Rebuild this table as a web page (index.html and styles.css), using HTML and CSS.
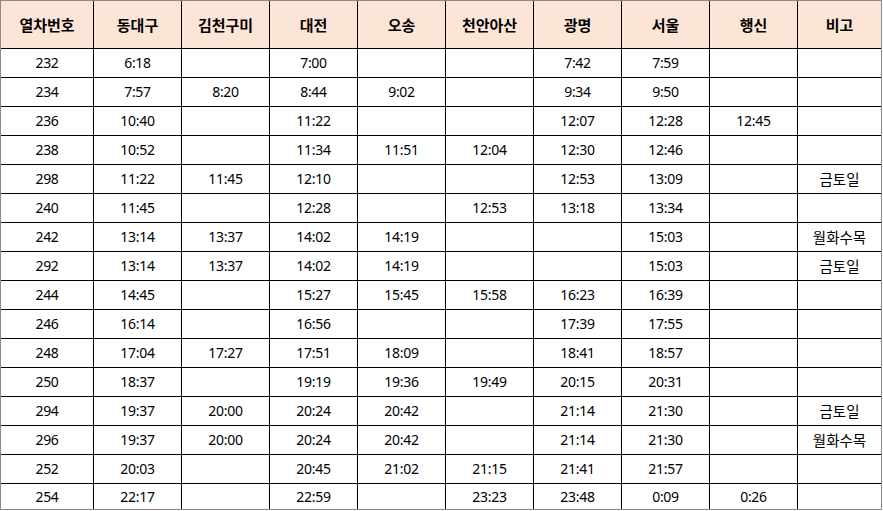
FILE: index.html
```html
<!DOCTYPE html>
<html lang="ko">
<head>
<meta charset="utf-8">
<title>열차 시간표</title>
<link rel="stylesheet" href="styles.css">
</head>
<body>
<div class="frame">
  <div class="row head">
    <div class="c">열차번호</div><div class="c">동대구</div><div class="c">김천구미</div><div class="c">대전</div><div class="c">오송</div><div class="c">천안아산</div><div class="c">광명</div><div class="c">서울</div><div class="c">행신</div><div class="c">비고</div>
  </div>
  <div class="row"><div class="c">232</div><div class="c">6:18</div><div class="c"></div><div class="c">7:00</div><div class="c"></div><div class="c"></div><div class="c">7:42</div><div class="c">7:59</div><div class="c"></div><div class="c"></div></div>
  <div class="row"><div class="c">234</div><div class="c">7:57</div><div class="c">8:20</div><div class="c">8:44</div><div class="c">9:02</div><div class="c"></div><div class="c">9:34</div><div class="c">9:50</div><div class="c"></div><div class="c"></div></div>
  <div class="row"><div class="c">236</div><div class="c">10:40</div><div class="c"></div><div class="c">11:22</div><div class="c"></div><div class="c"></div><div class="c">12:07</div><div class="c">12:28</div><div class="c">12:45</div><div class="c"></div></div>
  <div class="row"><div class="c">238</div><div class="c">10:52</div><div class="c"></div><div class="c">11:34</div><div class="c">11:51</div><div class="c">12:04</div><div class="c">12:30</div><div class="c">12:46</div><div class="c"></div><div class="c"></div></div>
  <div class="row"><div class="c">298</div><div class="c">11:22</div><div class="c">11:45</div><div class="c">12:10</div><div class="c"></div><div class="c"></div><div class="c">12:53</div><div class="c">13:09</div><div class="c"></div><div class="c note">금토일</div></div>
  <div class="row"><div class="c">240</div><div class="c">11:45</div><div class="c"></div><div class="c">12:28</div><div class="c"></div><div class="c">12:53</div><div class="c">13:18</div><div class="c">13:34</div><div class="c"></div><div class="c"></div></div>
  <div class="row"><div class="c">242</div><div class="c">13:14</div><div class="c">13:37</div><div class="c">14:02</div><div class="c">14:19</div><div class="c"></div><div class="c"></div><div class="c">15:03</div><div class="c"></div><div class="c note">월화수목</div></div>
  <div class="row"><div class="c">292</div><div class="c">13:14</div><div class="c">13:37</div><div class="c">14:02</div><div class="c">14:19</div><div class="c"></div><div class="c"></div><div class="c">15:03</div><div class="c"></div><div class="c note">금토일</div></div>
  <div class="row"><div class="c">244</div><div class="c">14:45</div><div class="c"></div><div class="c">15:27</div><div class="c">15:45</div><div class="c">15:58</div><div class="c">16:23</div><div class="c">16:39</div><div class="c"></div><div class="c"></div></div>
  <div class="row"><div class="c">246</div><div class="c">16:14</div><div class="c"></div><div class="c">16:56</div><div class="c"></div><div class="c"></div><div class="c">17:39</div><div class="c">17:55</div><div class="c"></div><div class="c"></div></div>
  <div class="row"><div class="c">248</div><div class="c">17:04</div><div class="c">17:27</div><div class="c">17:51</div><div class="c">18:09</div><div class="c"></div><div class="c">18:41</div><div class="c">18:57</div><div class="c"></div><div class="c"></div></div>
  <div class="row"><div class="c">250</div><div class="c">18:37</div><div class="c"></div><div class="c">19:19</div><div class="c">19:36</div><div class="c">19:49</div><div class="c">20:15</div><div class="c">20:31</div><div class="c"></div><div class="c"></div></div>
  <div class="row"><div class="c">294</div><div class="c">19:37</div><div class="c">20:00</div><div class="c">20:24</div><div class="c">20:42</div><div class="c"></div><div class="c">21:14</div><div class="c">21:30</div><div class="c"></div><div class="c note">금토일</div></div>
  <div class="row"><div class="c">296</div><div class="c">19:37</div><div class="c">20:00</div><div class="c">20:24</div><div class="c">20:42</div><div class="c"></div><div class="c">21:14</div><div class="c">21:30</div><div class="c"></div><div class="c note">월화수목</div></div>
  <div class="row"><div class="c">252</div><div class="c">20:03</div><div class="c"></div><div class="c">20:45</div><div class="c">21:02</div><div class="c">21:15</div><div class="c">21:41</div><div class="c">21:57</div><div class="c"></div><div class="c"></div></div>
  <div class="row last"><div class="c">254</div><div class="c">22:17</div><div class="c"></div><div class="c">22:59</div><div class="c"></div><div class="c">23:23</div><div class="c">23:48</div><div class="c">0:09</div><div class="c">0:26</div><div class="c"></div></div>
</div>
</body>
</html>
```

FILE: styles.css
```css
* { box-sizing: border-box; }
html, body { margin: 0; padding: 0; background: #fff; }
body {
  font-family: "Noto Sans", "Noto Sans CJK KR", sans-serif;
  font-size: 14px;
  letter-spacing: -0.3px;
  color: #000;
}
.frame {
  width: 882px;
  height: 510px;
  border: 1px solid #8a8a8a;
  overflow: hidden;
}
.row {
  display: grid;
  grid-template-columns: 93px repeat(8, 88px) 83px;
  height: 29px;
  border-bottom: 1px solid #000;
}
.row.head {
  height: 48px;
  background: #fce4d6;
  font-family: "Noto Sans CJK KR", sans-serif;
  font-weight: 700;
  font-size: 15px;
  letter-spacing: 0;
}
.row.last {
  height: 25px;
  border-bottom: none;
}
.c {
  display: flex;
  align-items: center;
  justify-content: center;
  border-right: 1px solid #000;
  white-space: nowrap;
  line-height: 1;
}
.c:last-child { border-right: none; }
.note {
  font-family: "Noto Sans CJK KR", sans-serif;
  font-size: 14.5px;
  letter-spacing: 0;
}
```
